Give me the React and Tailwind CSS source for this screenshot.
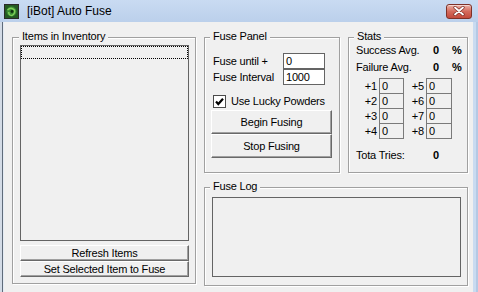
import React from 'react';

const Group = ({ label, className = '', labelLeft = 'left-[5px]', children }) => (
  <div className={`relative border border-[#a0a0a0] shadow-[inset_1px_1px_0_#fff,1px_1px_0_#fff] ${className}`}>
    <span className={`absolute -top-[8px] ${labelLeft} bg-[#f0f0f0] px-[3px] leading-[13px] whitespace-nowrap`}>
      {label}
    </span>
    {children}
  </div>
);

const Button = ({ className = '', children }) => (
  <div
    className={`flex items-center justify-center bg-[#f0f0f0] border border-t-white border-l-white border-r-[#696969] border-b-[#696969] shadow-[inset_-1px_-1px_0_#a0a0a0] ${className}`}
  >
    {children}
  </div>
);

const Field = ({ value }) => (
  <div className="w-[42px] h-[16px] bg-white border border-[#646464] pl-[2px] flex items-center leading-[13px]">
    {value}
  </div>
);

const StatBox = ({ className = '' }) => (
  <div className={`h-[16px] border border-[#7a7a7a] pl-[2px] flex items-center leading-[13px] ${className}`}>0</div>
);

function CloseButton() {
  return (
    <div className="w-[26px] h-[15px] rounded-[3px] border border-[#7e3128] bg-linear-to-b from-[#eab0a6] via-[#d46a5c] to-[#c44a3c] flex items-center justify-center shadow-[inset_0_1px_0_rgba(255,255,255,0.5)]">
      <svg width="12" height="10" viewBox="0 0 12 10">
        <path d="M2 1.5 L10 8.5 M10 1.5 L2 8.5" stroke="#7a2a22" strokeWidth="3.2" strokeLinecap="round" />
        <path d="M2 1.5 L10 8.5 M10 1.5 L2 8.5" stroke="#fff" strokeWidth="1.8" strokeLinecap="round" />
      </svg>
    </div>
  );
}

function AppIcon() {
  return (
    <svg width="15" height="15" viewBox="0 0 15 15" className="shrink-0">
      <rect x="0.5" y="0.5" width="14" height="14" fill="#235a23" stroke="#2a2a2a" />
      <circle cx="7.5" cy="7.5" r="5" fill="#3a8a34" />
      <path d="M3.5 6 Q7 2.5 10.5 6 Q11.5 9.5 8 11.5 Q4.5 11.5 4.8 8" stroke="#7fd15a" strokeWidth="1.4" fill="none" />
      <circle cx="8" cy="7.5" r="1.4" fill="#0f2f0f" />
    </svg>
  );
}

function CheckBox() {
  return (
    <svg width="13" height="13" viewBox="0 0 13 13" className="shrink-0">
      <rect x="0.5" y="0.5" width="12" height="12" fill="#fff" stroke="#4a4a4a" />
      <path d="M3 6.5 L5.3 9 L10 3.8" stroke="#000" strokeWidth="2.2" fill="none" />
    </svg>
  );
}

export default function App() {
  return (
    <div className="w-[478px] h-[292px] overflow-hidden flex flex-col bg-[#c4d7ef] text-black text-[11px] leading-[13px] tracking-[-0.2px] font-['Liberation_Sans',Arial,sans-serif]">
      {/* title bar */}
      <div className="h-[22px] shrink-0 flex items-center bg-linear-to-b from-[#c9dbf2] to-[#bbd0eb] pl-[4px] pr-[6px]">
        <AppIcon />
        <span className="ml-[8px] text-[12px] tracking-normal leading-[22px]">[iBot] Auto Fuse</span>
        <div className="ml-auto">
          <CloseButton />
        </div>
      </div>

      <div className="flex-1 flex">
        <div className="w-[4px] flex">
          <div className="w-[2px] bg-[#d3dbe6]" />
          <div className="w-px bg-[#5f6b7a]" />
          <div className="w-px bg-[#e4ebf4]" />
        </div>

        {/* client */}
        <div className="flex-1 bg-[#f0f0f0] pt-[15px] pl-[8px] flex gap-[8px]">
          <Group
            label="Items in Inventory"
            labelLeft="left-[6px]"
            className="w-[184px] h-[247px] pt-[7px] pl-[7px] flex flex-col"
          >
            <div className="w-[169px] h-[196px] border border-[#646464]">
              <div className="h-[13px] border border-dotted border-black" />
            </div>
            <div className="mt-[4px] w-[169px]">
              <Button className="h-[16px]">Refresh Items</Button>
              <Button className="h-[16px]">Set Selected Item to Fuse</Button>
            </div>
          </Group>

          <div className="w-[264px] flex flex-col">
            <div className="flex gap-[8px] h-[136px]">
              <Group label="Fuse Panel" className="w-[136px] h-[136px] pt-[15px]">
                <div className="flex pl-[8px]">
                  <div className="w-[70px] flex flex-col">
                    <div className="h-[16px] flex items-center">Fuse until +</div>
                    <div className="h-[16px] flex items-center">Fuse Interval</div>
                  </div>
                  <div>
                    <Field value="0" />
                    <Field value="1000" />
                  </div>
                </div>
                <div className="mt-[10px] pl-[8px] flex items-center gap-[5px]">
                  <CheckBox />
                  <span>Use Lucky Powders</span>
                </div>
                <div className="mt-[2px] pl-[6px] w-[128px]">
                  <Button className="w-[121px] h-[24px]">Begin Fusing</Button>
                  <Button className="w-[121px] h-[24px]">Stop Fusing</Button>
                </div>
              </Group>

              <Group label="Stats" className="w-[120px] h-[136px] pt-[4px] pl-[7px]">
                <div className="flex items-center h-[17px]">
                  <span className="w-[77px]">Success Avg.</span>
                  <span className="w-[19px] font-bold">0</span>
                  <span className="font-bold">%</span>
                </div>
                <div className="flex items-center h-[17px]">
                  <span className="w-[77px]">Failure Avg.</span>
                  <span className="w-[19px] font-bold">0</span>
                  <span className="font-bold">%</span>
                </div>
                <div className="mt-[2px]">
                  {[
                    ['+1', '+5'],
                    ['+2', '+6'],
                    ['+3', '+7'],
                    ['+4', '+8'],
                  ].map(([a, b], i) => (
                    <div key={a} className={`flex ${i > 0 ? '-mt-px' : ''}`}>
                      <span className="w-[23px] pr-[2px] text-right leading-[16px]">{a}</span>
                      <StatBox className="w-[25px]" />
                      <span className="w-[22px] pr-[2px] text-right leading-[16px]">{b}</span>
                      <StatBox className="w-[26px]" />
                    </div>
                  ))}
                </div>
                <div className="mt-[8px] flex items-center h-[17px]">
                  <span className="w-[77px]">Tota Tries:</span>
                  <span className="font-bold">0</span>
                </div>
              </Group>
            </div>

            <Group label="Fuse Log" className="mt-[14px] w-[264px] h-[99px] pt-[9px] pl-[7px]">
              <div className="w-[249px] h-[80px] border border-[#646464]" />
            </Group>
          </div>
        </div>

        <div className="w-[5px] flex">
          <div className="w-[3px] bg-[#c9dbf1]" />
          <div className="w-[2px] bg-[#b4c9e4]" />
        </div>
      </div>
    </div>
  );
}
